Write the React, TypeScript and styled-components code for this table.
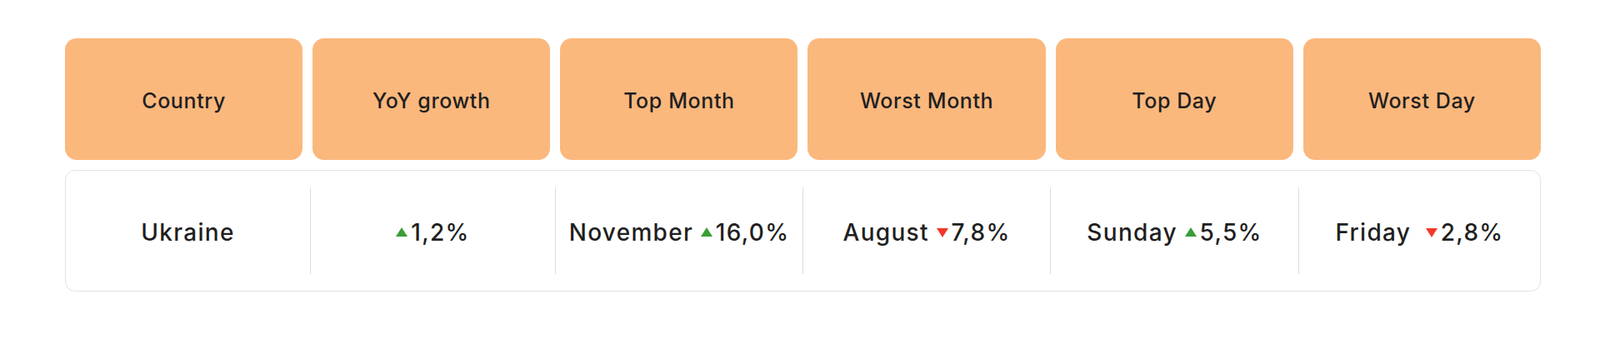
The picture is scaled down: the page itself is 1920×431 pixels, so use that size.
import styled, { createGlobalStyle } from "styled-components";

const GlobalStyle = createGlobalStyle`
  body {
    margin: 0;
    background: #ffffff;
    font-family: "Inter", "Noto Sans", sans-serif;
  }
`;

const Page = styled.div`
  padding: 46px 71px 0 78px;
`;

const HeaderRow = styled.div`
  display: grid;
  grid-template-columns: repeat(6, 1fr);
  gap: 12px;
`;

const HeaderCell = styled.div`
  height: 146px;
  box-sizing: border-box;
  padding-top: 4px;
  background: #fbb87d;
  border-radius: 14px;
  display: flex;
  align-items: center;
  justify-content: center;
  font-size: 25px;
  font-weight: 500;
  letter-spacing: 0.6px;
  color: #1f1f1f;
`;

const DataRow = styled.div`
  margin-top: 12px;
  height: 146px;
  box-sizing: border-box;
  border: 1px solid #e3e3e3;
  border-radius: 12px;
  display: grid;
  grid-template-columns: 293px 294px 297px 297px 298px 1fr;
`;

const DataCell = styled.div`
  margin: 20px 0;
  padding-top: 4px;
  display: flex;
  align-items: center;
  justify-content: center;
  font-size: 28px;
  font-weight: 500;
  letter-spacing: 1.3px;
  color: #1f1f1f;
  white-space: pre;

  & + & {
    border-left: 1px solid #dcdcdc;
  }
`;

const ArrowIcon = styled.svg<{ $down?: boolean }>`
  display: inline-block;
  margin-right: 4px;
  vertical-align: ${(p) => (p.$down ? "4px" : "5px")};
`;

const Arrow = ({ down }: { down?: boolean }) => (
  <ArrowIcon $down={down} width="14" height="11" viewBox="0 0 14 11">
    {down ? (
      <polygon points="0,0 14,0 7,11" fill="#f2382a" />
    ) : (
      <polygon points="7,0 14,11 0,11" fill="#3a9e35" />
    )}
  </ArrowIcon>
);

const headers = ["Country", "YoY growth", "Top Month", "Worst Month", "Top Day", "Worst Day"];

const cells: { label: string; value?: string; down?: boolean }[] = [
  { label: "Ukraine" },
  { label: "", value: "1,2%" },
  { label: "November ", value: "16,0%" },
  { label: "August ", value: "7,8%", down: true },
  { label: "Sunday ", value: "5,5%" },
  { label: "Friday  ", value: "2,8%", down: true },
];

export default function App() {
  return (
    <Page>
      <GlobalStyle />
      <HeaderRow>
        {headers.map((h) => (
          <HeaderCell key={h}>{h}</HeaderCell>
        ))}
      </HeaderRow>
      <DataRow>
        {cells.map((c, i) => (
          <DataCell key={i}>
            <span>
              {c.label}
              {c.value && <Arrow down={c.down} />}
              {c.value}
            </span>
          </DataCell>
        ))}
      </DataRow>
    </Page>
  );
}
